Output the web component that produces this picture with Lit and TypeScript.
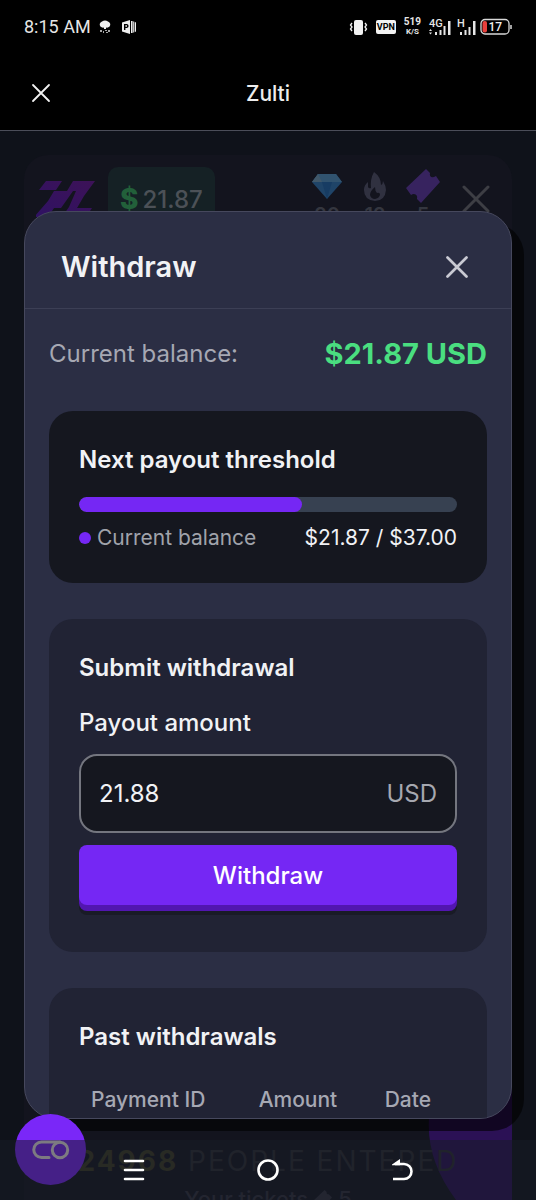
import { LitElement, html, css } from "lit";
import { customElement, property, state } from "lit/decorators.js";

@customElement("status-bar")
class StatusBar extends LitElement {
  static styles = css`
    :host {
      display: flex;
      align-items: center;
      justify-content: space-between;
      height: 54px;
      padding: 0 24px;
      color: #e6e6e6;
      font-family: Roboto, sans-serif;
    }
    .group {
      display: flex;
      align-items: center;
      gap: 8px;
    }
    .time {
      font-size: 18px;
      line-height: 24px;
      white-space: nowrap;
    }
    .apps {
      display: flex;
      gap: 10px;
    }
    .vpn {
      background: #f2f2f2;
      color: #000;
      border-radius: 2px;
      font-size: 9px;
      font-weight: 700;
      line-height: 14px;
      padding: 0 1px;
    }
    .rate {
      display: grid;
      justify-items: center;
      font-weight: 700;
      font-size: 10px;
      line-height: 10px;
    }
    .unit {
      font-size: 8px;
    }
    svg {
      display: block;
      overflow: visible;
    }
    .net {
      font-size: 11px;
      font-weight: 500;
    }
    .level {
      font-size: 12px;
      font-weight: 500;
    }
  `;

  render() {
    return html`
      <div class="group">
        <span class="time">8:15 AM</span>
        <div class="apps">
          <svg width="12" height="14" viewBox="0 0 12 14" fill="#eee">
            <path d="M3 1.600Q6-.4 9 1.600Q12.600 3.600 10.600 6.600Q9 8.200 7 7.600V9H5V7.600Q3 8.200 1.400 6.600Q-.6 3.600 3 1.600Z" />
            <path d="M1 10h2v2H1zM4 11h1v2H4zM6 10h2v1H6zM7 12h2v1H7zM9 10h2v2H9z" opacity=".7" />
          </svg>
          <svg width="16" height="14" viewBox="0 0 16 14" fill="#eee">
            <path fill-rule="evenodd" d="M1 2.400 9 0v14l-8-2.400ZM3 4v6h1.400V8H6q1.600-.4 1.600-2T6 4ZM4.400 5.200H6v1.600H4.400Z" />
            <path d="M10 1h1.600v12H10zM12.200 1.500h1v11h-1zM13.800 2.200H15v9.600h-1.200z" />
          </svg>
        </div>
      </div>
      <div class="group">
        <svg width="19" height="16" viewBox="0 0 19 16" fill="#f2f2f2">
          <rect x="5" y="1" width="9" height="15" rx="2" />
          <path d="M3 4 1.500 6 3 8 1.500 10 3 12M16 4l1.500 2L16 8l1.500 2L16 12" fill="none" stroke="#f2f2f2" stroke-width="1.300" />
        </svg>
        <span class="vpn">VPN</span>
        <span class="rate"><span>519</span><span class="unit">K/S</span></span>
        <svg width="20" height="18" viewBox="0 0 20 18" fill="#e6e6e6">
          <text class="net" x="0" y="9">4G</text>
          <path d="M0 13l1.500-2L3 13zM0 14.500h3l-1.500 2zM6 14h2v3H6zM10.500 12h2v5h-2zM14.500 8h2v9h-2zM19 3h2.500v14H19z" />
        </svg>
        <svg width="15" height="18" viewBox="0 0 15 18" fill="#e6e6e6">
          <text class="net" x="0" y="9">H</text>
          <path d="M3 14h2v3H3zM7.500 12h2v5h-2zM11.500 9h2v8h-2zM16 3h2.500v14H16z" />
        </svg>
        <svg width="32" height="18" viewBox="0 0 32 18">
          <rect x="1" y="1.500" width="28" height="14.500" rx="4" fill="none" stroke="#d8d8d8" stroke-width="1.300" />
          <rect x="2.500" y="3" width="4.500" height="11.500" rx="2" fill="#e8403c" />
          <path d="M31 7v4" stroke="#d8d8d8" stroke-width="1.500" />
          <text class="level" x="8.500" y="13" fill="#eee">17</text>
        </svg>
      </div>
    `;
  }
}

@customElement("app-backdrop")
class AppBackdrop extends LitElement {
  static styles = css`
    :host {
      display: block;
      height: 100%;
      box-sizing: border-box;
      padding: 24px 24px 0;
    }
    .panel {
      position: relative;
      display: flex;
      flex-direction: column;
      justify-content: space-between;
      height: 100%;
      border-radius: 24px 24px 0 0;
      background: #13141e;
      overflow: hidden;
    }
    .top {
      display: flex;
      align-items: flex-start;
      padding: 12px 22px 0 12px;
    }
    .logo {
      margin-top: 14px;
    }
    .badge {
      display: flex;
      align-items: center;
      gap: 4px;
      height: 64px;
      margin-left: 12px;
      padding: 0 12px;
      border-radius: 10px;
      background: #152125;
      color: #4c5157;
      font-size: 24px;
      font-weight: 500;
      box-sizing: border-box;
    }
    .coin {
      color: #22603a;
      font-weight: 800;
      font-size: 28px;
    }
    .stats {
      display: flex;
      gap: 14px;
      margin-left: auto;
      color: #34363f;
      font-size: 20px;
      font-weight: 600;
    }
    .stat {
      display: grid;
      justify-items: center;
      width: 34px;
      line-height: 20px;
    }
    .leave {
      margin: 18px 0 0 22px;
    }
    .bottom {
      position: relative;
      display: grid;
      justify-items: center;
      height: 58px;
      color: #2b2c30;
      font-size: 28px;
      line-height: 38px;
      white-space: nowrap;
    }
    .entered {
      letter-spacing: 2px;
    }
    .count {
      font-weight: 700;
      color: #3b3b22;
    }
    .tickets {
      color: #30313c;
      font-size: 22px;
      font-weight: 500;
      display: flex;
      align-items: center;
      gap: 6px;
    }
    .glow {
      position: absolute;
      right: 0;
      bottom: 0;
    }
    svg {
      display: block;
    }
  `;

  render() {
    return html`
      <section class="panel">
        <svg class="glow" width="90" height="200" viewBox="0 0 90 200">
          <path d="M7 118Q4 160 34 200H90V0Q12 30 7 118Z" fill="#2b1155" />
        </svg>
        <header class="top">
          <svg class="logo" width="60" height="40" viewBox="0 0 60 40">
            <defs>
              <linearGradient id="z" x1="0" y1="1" x2="1" y2="0">
                <stop offset="0" stop-color="#2f1263" />
                <stop offset="1" stop-color="#3d1257" />
              </linearGradient>
            </defs>
            <path fill="url(#z)" d="M10 0H26L20 9H3ZM37 0H59L48 15L41 27H56L50 36H26L33 26L40 10H31ZM18 10H37L30 20L25 27H18L12 36H-2L12 20Z" />
          </svg>
          <div class="badge"><span class="coin">$</span><span>21.87</span></div>
          <div class="stats">
            <div class="stat">
              <svg width="30" height="38" viewBox="0 0 30 38">
                <path d="M6 7H24L30 15 15 32 0 15Z" fill="#1f4468" />
                <path d="M6 7H24L30 15H0Z" fill="#31536f" />
                <path d="M10 15H20L15 32Z" fill="#173c63" />
                <path d="M6 7 10 15H0Z" fill="#41586a" />
              </svg>
              <span>20</span>
            </div>
            <div class="stat">
              <svg width="24" height="38" viewBox="0 0 24 38">
                <path fill="#303140" d="M11 5Q18 10 18 18Q20 17 20 14Q23 19 23 23Q22 34 12 34Q1 33 1 23Q1 18 5 15V20Q6 22 8 21Q7 12 11 5ZM12 20Q7 24 7 28Q8 32 12 32Q17 31 17 27Q16 25 14 26Q12 24 12 20Z" />
              </svg>
              <span>12</span>
            </div>
            <div class="stat">
              <svg width="34" height="38" viewBox="0 0 34 38">
                <path fill="#37235f" d="M20 2 24 6Q23 11 28 10L30 9 34 15 15 36 11 32Q12 27 7 27L5 28 0 21Z" />
              </svg>
              <span>5</span>
            </div>
          </div>
          <svg class="leave" width="28" height="28" viewBox="0 0 28 28">
            <path d="M2 2 26 26M26 2 2 26" stroke="#3d3e44" stroke-width="3" stroke-linecap="round" />
          </svg>
        </header>
        <div class="bottom">
          <div class="entered"><span class="count">24968</span> PEOPLE ENTERED</div>
          <div class="tickets">
            <span>Your tickets</span>
            <svg width="18" height="18" viewBox="0 0 34 34">
              <path fill="#30313c" d="M20 0 24 4Q23 9 28 8L34 14 16 34 12 30Q12 25 7 25L0 19Z" />
            </svg>
            <span>5</span>
          </div>
        </div>
      </section>
    `;
  }
}

@customElement("withdraw-dialog")
class WithdrawDialog extends LitElement {
  @property({ type: Number }) balance = 21.87;
  @property({ type: Number }) threshold = 37;
  @state() private amount = "21.88";

  static styles = css`
    :host {
      display: flex;
      flex-direction: column;
      box-sizing: border-box;
      border: 1px solid #46485d;
      border-radius: 32px;
      background: #2b2e44;
      box-shadow: 12px 12px 0 rgba(0, 0, 0, 0.6);
      overflow: hidden;
      color: #f1f2f5;
      font-size: 24px;
    }
    .head {
      display: flex;
      align-items: center;
      justify-content: space-between;
      flex: none;
      height: 97px;
      box-sizing: border-box;
      padding: 14px 43px 0 36px;
      border-bottom: 1px solid #3c3f55;
    }
    h1,
    h2 {
      margin: 0;
      font-weight: 600;
    }
    h1 {
      font-size: 29px;
      line-height: 38px;
    }
    h2 {
      font-size: 24px;
      line-height: 38px;
    }
    .close {
      padding: 0;
      border: 0;
      background: none;
    }
    svg {
      display: block;
    }
    .body {
      display: flex;
      flex-direction: column;
      gap: 36px;
      flex: 1;
      min-height: 0;
      overflow: hidden;
      padding: 24px 24px 0;
    }
    .balance,
    .legend {
      display: flex;
      align-items: center;
      justify-content: space-between;
    }
    .balance {
      line-height: 42px;
      color: #a6a8b3;
    }
    .total {
      color: #4ade80;
      font-size: 29px;
      font-weight: 700;
    }
    .card {
      flex: none;
      display: flex;
      flex-direction: column;
      padding: 30px;
      border-radius: 24px;
      background: #212334;
    }
    .dark {
      background: #15171f;
    }
    .track {
      height: 15px;
      margin: 18px 0 10px;
      border-radius: 8px;
      background: #374151;
      overflow: hidden;
    }
    .fill {
      height: 100%;
      border-radius: 8px;
      background: #7527f4;
    }
    .legend {
      font-size: 21px;
      line-height: 31px;
    }
    .key {
      display: flex;
      align-items: center;
      gap: 6px;
      color: #a0a3ab;
    }
    .dot {
      width: 12px;
      height: 12px;
      border-radius: 50%;
      background: #7527f4;
    }
    .label {
      margin: 18px 0 13px;
      line-height: 36px;
      font-weight: 500;
    }
    .field {
      display: flex;
      align-items: center;
      height: 79px;
      box-sizing: border-box;
      padding: 0 18px;
      border: 2px solid #74767f;
      border-radius: 18px;
      background: #15171f;
      color: #a6a8b0;
    }
    input {
      flex: 1;
      min-width: 0;
      padding: 0;
      border: 0;
      outline: 0;
      background: none;
      color: #f1f2f5;
      font: inherit;
    }
    .submit {
      height: 60px;
      margin: 12px 0 17px;
      padding: 0;
      border: 0;
      border-radius: 8px;
      background: #7527f4;
      box-shadow: 0 6px 0 #5216b0, 0 10px 0 #191b26;
      color: #fff;
      font: inherit;
      font-weight: 500;
    }
    table {
      width: 100%;
      margin-top: 18px;
      border-collapse: collapse;
      table-layout: fixed;
    }
    th {
      padding: 12px;
      color: #a6a8b3;
      font-size: 21px;
      font-weight: 500;
      line-height: 28px;
      text-align: left;
    }
    .id {
      width: 38%;
    }
    .amount {
      width: 27%;
    }
  `;

  render() {
    const percent = Math.min(100, (this.balance / this.threshold) * 100);
    const balance = this.balance.toFixed(2);
    return html`
      <header class="head">
        <h1>Withdraw</h1>
        <button class="close" aria-label="Close">
          <svg width="22" height="22" viewBox="0 0 22 22">
            <path d="M1.500 1.500 20.500 20.500M20.500 1.500 1.500 20.500" stroke="#c9cad3" stroke-width="2.700" stroke-linecap="round" />
          </svg>
        </button>
      </header>
      <div class="body">
        <div class="balance"><span>Current balance:</span><span class="total">$${balance} USD</span></div>
        <section class="card dark">
          <h2>Next payout threshold</h2>
          <div class="track"><div class="fill" style="width:${percent}%"></div></div>
          <div class="legend">
            <span class="key"><span class="dot"></span>Current balance</span>
            <span>$${balance} / $${this.threshold.toFixed(2)}</span>
          </div>
        </section>
        <section class="card">
          <h2>Submit withdrawal</h2>
          <label class="label" for="amount">Payout amount</label>
          <div class="field">
            <input
              id="amount"
              inputmode="decimal"
              .value=${this.amount}
              @input=${(e: Event) => (this.amount = (e.target as HTMLInputElement).value)}
            />
            <span>USD</span>
          </div>
          <button class="submit">Withdraw</button>
        </section>
        <section class="card">
          <h2>Past withdrawals</h2>
          <table>
            <thead>
              <tr>
                <th class="id">Payment ID</th>
                <th class="amount">Amount</th>
                <th>Date</th>
              </tr>
            </thead>
          </table>
        </section>
      </div>
    `;
  }
}

@customElement("app-root")
class AppRoot extends LitElement {
  static styles = css`
    :host {
      display: flex;
      flex-direction: column;
      height: 100vh;
      background: #000;
      font-family: Inter, sans-serif;
    }
    .bar {
      display: grid;
      grid-template-columns: 32px 1fr 32px;
      align-items: center;
      height: 74px;
      padding: 2px 25px 0;
      border-bottom: 1px solid #4b4d59;
      color: #ededed;
      text-align: center;
      font-size: 21px;
      font-weight: 500;
    }
    button {
      display: grid;
      place-items: center;
      padding: 0;
      border: 0;
      background: none;
    }
    .stage {
      position: relative;
      flex: 1;
      min-height: 0;
      background: #0f121a;
      overflow: hidden;
    }
    .overlay {
      position: absolute;
      inset: 0;
      display: grid;
      padding: 80px 24px 81px;
    }
    withdraw-dialog {
      min-height: 0;
    }
    .fab {
      position: absolute;
      left: 15px;
      bottom: 15px;
      width: 71px;
      height: 71px;
      border-radius: 50%;
      background: #7a27f8;
    }
    .nav {
      position: absolute;
      inset: auto 0 0;
      display: grid;
      grid-template-columns: repeat(3, 134px);
      justify-content: center;
      height: 60px;
      background: rgba(24, 27, 38, 0.54);
    }
  `;

  render() {
    return html`
      <status-bar></status-bar>
      <header class="bar">
        <button aria-label="Close page">
          <svg width="20" height="20" viewBox="0 0 20 20">
            <path d="M2 2 18 18M18 2 2 18" stroke="#f2f2f2" stroke-width="1.800" stroke-linecap="round" />
          </svg>
        </button>
        <span>Zulti</span>
      </header>
      <main class="stage">
        <app-backdrop></app-backdrop>
        <div class="overlay"><withdraw-dialog .balance=${21.87} .threshold=${37}></withdraw-dialog></div>
        <button class="fab" aria-label="Open widget">
          <svg width="38" height="20" viewBox="0 0 38 20" fill="none" stroke="#f4ecec" stroke-width="3">
            <path d="M17 17.500H9.500a7.500 7.500 0 0 1 0-15.500H28" stroke-linecap="round" />
            <circle cx="28" cy="10" r="7.700" />
          </svg>
        </button>
        <nav class="nav">
          <button aria-label="Recent apps">
            <svg width="22" height="22" viewBox="0 0 22 22" stroke="#fff" stroke-width="2.600" stroke-linecap="round">
              <path d="M2 2H20M2 11H20M2 20H20" />
            </svg>
          </button>
          <button aria-label="Home">
            <svg width="24" height="24" viewBox="0 0 24 24"><circle cx="12" cy="12" r="9.500" fill="none" stroke="#fff" stroke-width="2.600" /></svg>
          </button>
          <button aria-label="Back">
            <svg width="22" height="24" viewBox="0 0 22 24">
              <path d="M4 6H13a7.500 7.500 0 0 1 0 15H2" fill="none" stroke="#fff" stroke-width="2.600" />
              <path d="M1 6.500 9 1V7.300H1Z" fill="#fff" />
            </svg>
          </button>
        </nav>
      </main>
    `;
  }
}
